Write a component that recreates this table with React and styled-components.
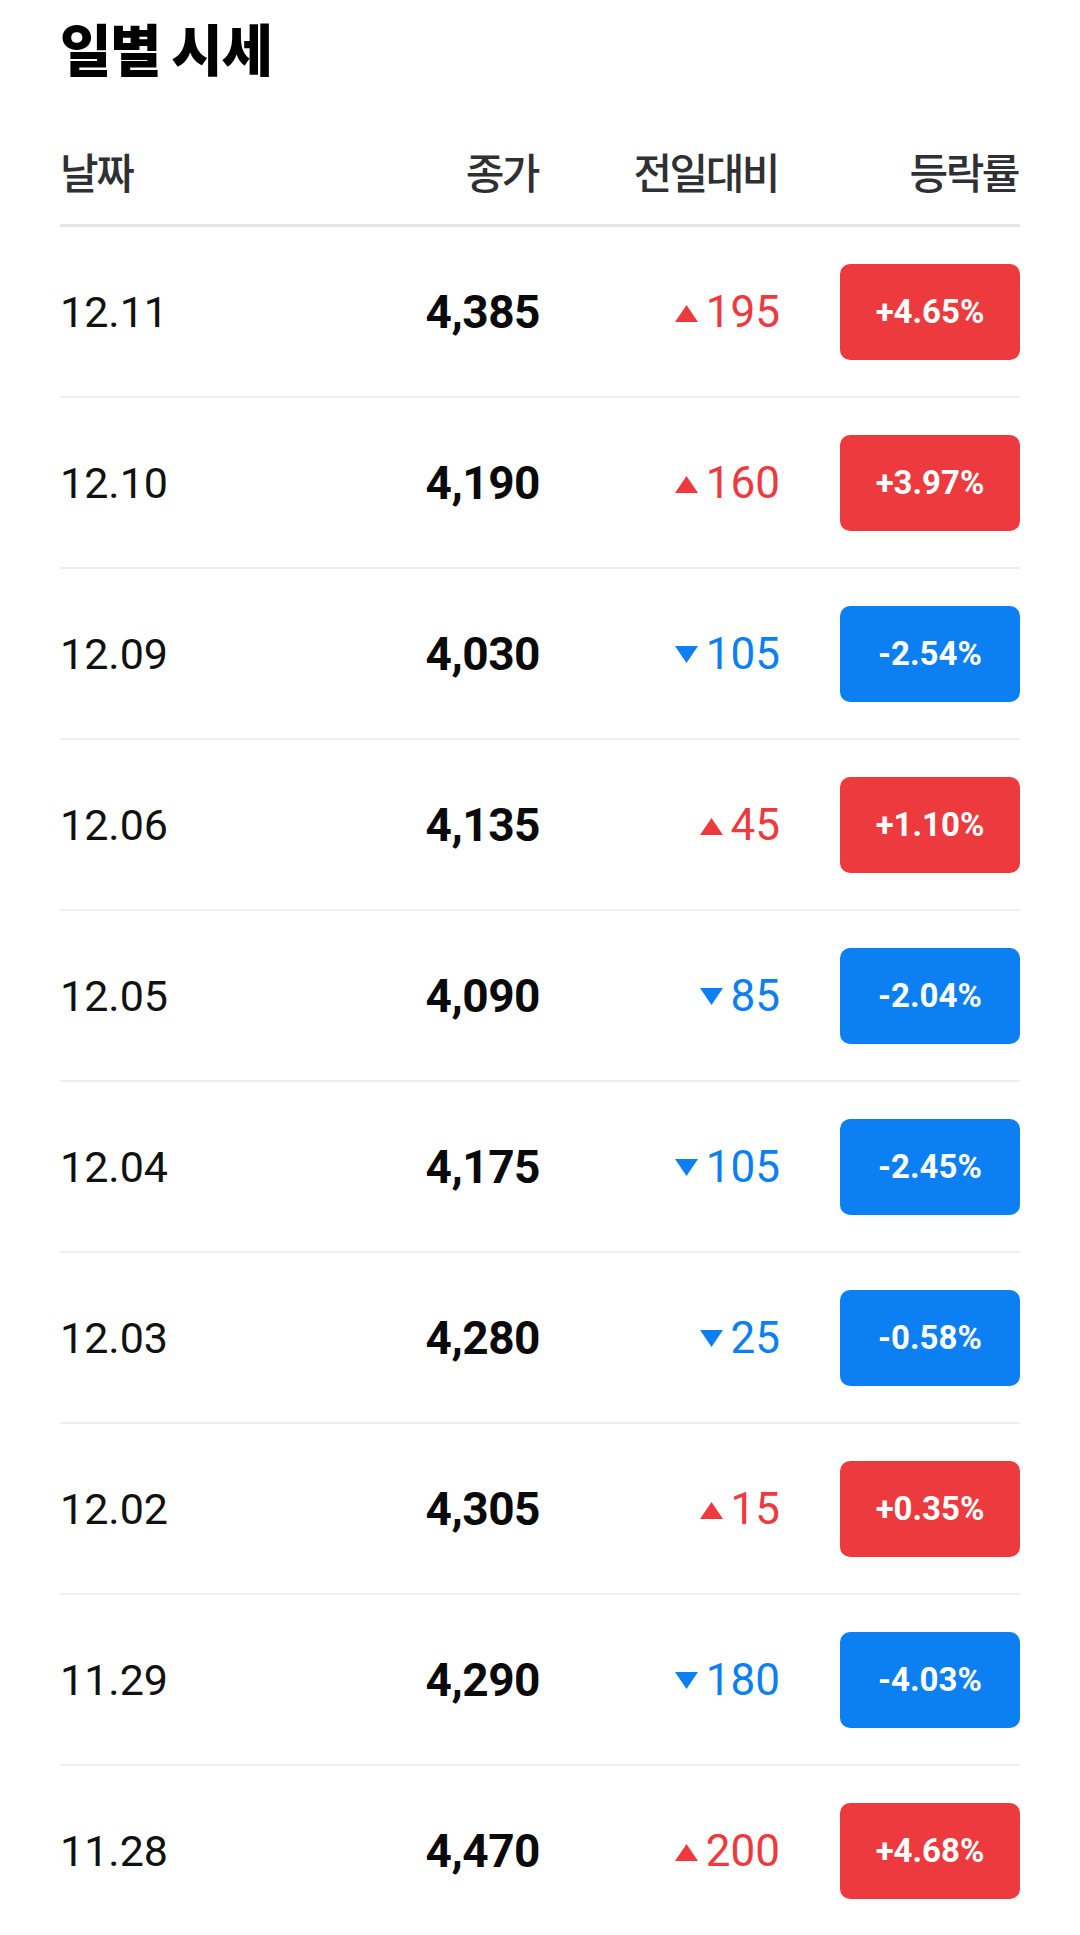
import React from "react";
import styled, { createGlobalStyle } from "styled-components";

const Global = createGlobalStyle`
  html, body { margin: 0; padding: 0; background: #ffffff; }
  body { font-family: Roboto, "Noto Sans CJK KR", sans-serif; -webkit-font-smoothing: antialiased; }
`;

const UP = "#ec3a3e";
const DOWN = "#0c7ff2";

const Page = styled.main`
  padding: 0 60px;
  background: #fff;
`;

const Title = styled.h1`
  margin: 0;
  padding-top: 15px;
  height: 64px;
  font-family: "Noto Sans CJK KR", sans-serif;
  font-weight: 900;
  font-size: 56px;
  line-height: 64px;
  letter-spacing: -1.5px;
  color: #000;
`;

const Grid = styled.div`
  display: grid;
  grid-template-columns: repeat(4, 1fr);
  align-items: center;
`;

const HeaderRow = styled(Grid)`
  margin-top: 45px;
  height: 94px;
  padding-bottom: 6px;
  border-bottom: 3px solid #e5e5e5;
`;

const HeadCell = styled.div`
  font-family: "Noto Sans CJK KR", sans-serif;
  font-weight: 500;
  font-size: 42px;
  line-height: 60px;
  letter-spacing: -2.5px;
  color: #2f3034;
  text-align: ${(p) => (p.$left ? "left" : "right")};
  padding-right: ${(p) => (p.$left ? "0" : "2px")};
`;

const Row = styled(Grid)`
  height: 169px;
  border-bottom: 2px solid #eeeeee;
`;

const DateCell = styled.div`
  font-family: Roboto, sans-serif;
  font-size: 43px;
  font-weight: 400;
  color: #111;
`;

const PriceCell = styled.div`
  font-family: Roboto, sans-serif;
  font-size: 46px;
  font-weight: 700;
  color: #0a0a0a;
  text-align: right;
  letter-spacing: -0.5px;
`;

const ChangeCell = styled.div`
  display: flex;
  justify-content: flex-end;
  align-items: center;
  gap: 8px;
  font-family: Roboto, sans-serif;
  font-size: 44px;
  font-weight: 400;
  color: ${(p) => (p.$up ? UP : DOWN)};
`;

const BadgeCell = styled.div`
  display: flex;
  justify-content: flex-end;
`;

const Badge = styled.div`
  width: 180px;
  height: 96px;
  border-radius: 10px;
  background: ${(p) => (p.$up ? UP : DOWN)};
  color: #fff;
  display: flex;
  align-items: center;
  justify-content: center;
  font-family: Roboto, sans-serif;
  font-weight: 700;
  font-size: 33px;
`;

const Tri = ({ up, color }) => (
  <svg width="23" height="17" viewBox="0 0 23 17" style={{ display: "block", marginTop: up ? 4 : 2 }}>
    {up ? (
      <polygon points="11.5,0 23,17 0,17" fill={color} />
    ) : (
      <polygon points="0,0 23,0 11.5,17" fill={color} />
    )}
  </svg>
);

const data = [
  ["12.11", "4,385", true, "195", "+4.65%"],
  ["12.10", "4,190", true, "160", "+3.97%"],
  ["12.09", "4,030", false, "105", "-2.54%"],
  ["12.06", "4,135", true, "45", "+1.10%"],
  ["12.05", "4,090", false, "85", "-2.04%"],
  ["12.04", "4,175", false, "105", "-2.45%"],
  ["12.03", "4,280", false, "25", "-0.58%"],
  ["12.02", "4,305", true, "15", "+0.35%"],
  ["11.29", "4,290", false, "180", "-4.03%"],
  ["11.28", "4,470", true, "200", "+4.68%"],
];

export default function App() {
  return (
    <>
      <Global />
      <Page>
        <Title>일별 시세</Title>
        <HeaderRow>
          <HeadCell $left>날짜</HeadCell>
          <HeadCell>종가</HeadCell>
          <HeadCell>전일대비</HeadCell>
          <HeadCell>등락률</HeadCell>
        </HeaderRow>
        {data.map(([d, p, up, c, r]) => (
          <Row key={d}>
            <DateCell>{d}</DateCell>
            <PriceCell>{p}</PriceCell>
            <ChangeCell $up={up}>
              <Tri up={up} color={up ? UP : DOWN} />
              <span>{c}</span>
            </ChangeCell>
            <BadgeCell>
              <Badge $up={up}>{r}</Badge>
            </BadgeCell>
          </Row>
        ))}
      </Page>
    </>
  );
}
